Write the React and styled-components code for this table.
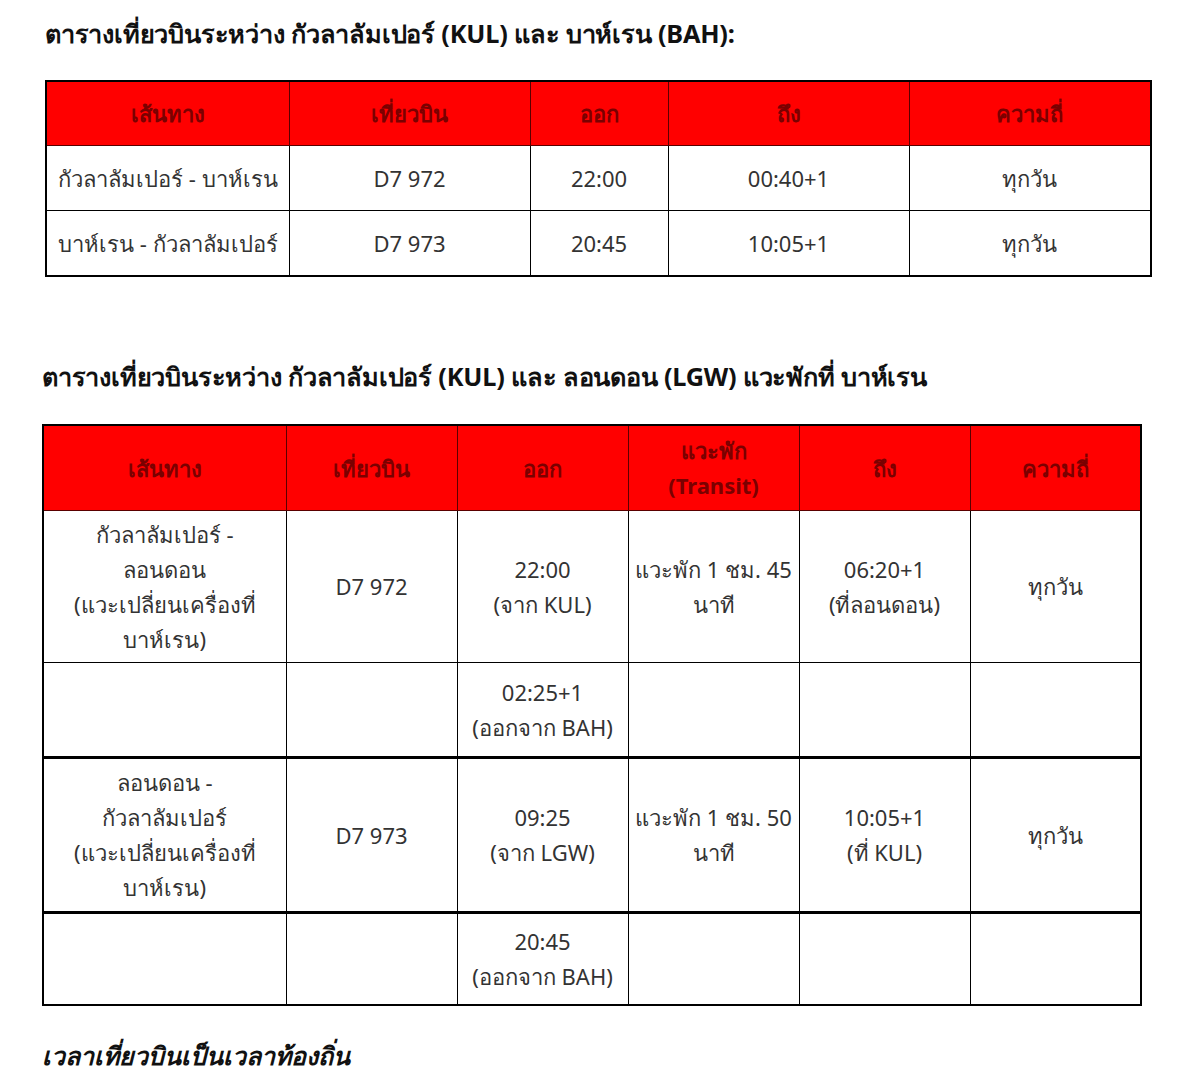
import React from "react";
import styled, { createGlobalStyle } from "styled-components";

const Global = createGlobalStyle`
  html, body { margin: 0; padding: 0; background: #fff; }
  body { font-family: "Noto Sans", "Liberation Sans", sans-serif; color: #2b2b2b; }
`;

const Page = styled.div`
  width: 1200px;
  height: 1085px;
  overflow: hidden;
  padding-top: 14px;
  box-sizing: border-box;
`;

const Section = styled.section`
  margin-left: ${(p) => p.$left}px;
  margin-bottom: ${(p) => p.$gap}px;
`;

const Title = styled.h2`
  margin: 0 0 ${(p) => p.$below}px 0;
  font-size: 25.3px;
  font-weight: 700;
  line-height: 38px;
  color: #111;
  letter-spacing: -0.2px;
`;

const Table = styled.table`
  border-collapse: collapse;
  table-layout: fixed;
  width: ${(p) => p.$width}px;
  border: 2px solid #000;
`;

const HeadCell = styled.th`
  background: #ff0000;
  color: #7a0000;
  font-size: 22px;
  font-weight: 700;
  line-height: 35px;
  border: 1px solid #5a0000;
  height: ${(p) => p.$h}px;
  padding: 0;
  text-align: center;
  vertical-align: middle;
`;

const Cell = styled.td`
  font-size: 22px;
  line-height: 35px;
  color: #333;
  border: 1.5px solid #000;
  border-top-width: ${(p) => (p.$thick ? 3 : 1.5)}px;
  height: ${(p) => p.$h}px;
  padding: 0 4px;
  text-align: center;
  vertical-align: middle;
  white-space: pre-line;
`;

const Note = styled.p`
  margin: 0;
  margin-left: 42px;
  font-size: 25px;
  font-weight: 700;
  font-style: italic;
  color: #111;
  line-height: 38px;
`;

const HeadText = styled.span`
  white-space: pre-line;
`;

const t1Cols = [243, 241, 138, 241, 242];
const t1Head = ["เส้นทาง", "เที่ยวบิน", "ออก", "ถึง", "ความถี่"];
const t1Rows = [
  ["กัวลาลัมเปอร์ - บาห์เรน", "D7 972", "22:00", "00:40+1", "ทุกวัน"],
  ["บาห์เรน - กัวลาลัมเปอร์", "D7 973", "20:45", "10:05+1", "ทุกวัน"],
];

const t2Cols = [243, 171, 171, 171, 171, 171];
const t2Head = ["เส้นทาง", "เที่ยวบิน", "ออก", "แวะพัก\n(Transit)", "ถึง", "ความถี่"];
const t2Rows = [
  {
    h: 151,
    cells: [
      "กัวลาลัมเปอร์ -\nลอนดอน\n(แวะเปลี่ยนเครื่องที่\nบาห์เรน)",
      "D7 972",
      "22:00\n(จาก KUL)",
      "แวะพัก 1 ชม. 45\nนาที",
      "06:20+1\n(ที่ลอนดอน)",
      "ทุกวัน",
    ],
  },
  { h: 93, cells: ["", "", "02:25+1\n(ออกจาก BAH)", "", "", ""] },
  {
    h: 152,
    thick: true,
    cells: [
      "ลอนดอน -\nกัวลาลัมเปอร์\n(แวะเปลี่ยนเครื่องที่\nบาห์เรน)",
      "D7 973",
      "09:25\n(จาก LGW)",
      "แวะพัก 1 ชม. 50\nนาที",
      "10:05+1\n(ที่ KUL)",
      "ทุกวัน",
    ],
  },
  { h: 90, thick: true, cells: ["", "", "20:45\n(ออกจาก BAH)", "", "", ""] },
];

export default function App() {
  return (
    <Page>
      <Global />
      <Section $left={45} $gap={80}>
        <Title $below={28}>ตารางเที่ยวบินระหว่าง กัวลาลัมเปอร์ (KUL) และ บาห์เรน (BAH):</Title>
        <Table $width={1106}>
          <colgroup>
            {t1Cols.map((w, i) => (
              <col key={i} style={{ width: w }} />
            ))}
          </colgroup>
          <thead>
            <tr>
              {t1Head.map((h) => (
                <HeadCell key={h} $h={63}>{h}</HeadCell>
              ))}
            </tr>
          </thead>
          <tbody>
            {t1Rows.map((r, i) => (
              <tr key={i}>
                {r.map((c, j) => (
                  <Cell key={j} $h={64}>{c}</Cell>
                ))}
              </tr>
            ))}
          </tbody>
        </Table>
      </Section>
      <Section $left={42} $gap={30}>
        <Title $below={29}>ตารางเที่ยวบินระหว่าง กัวลาลัมเปอร์ (KUL) และ ลอนดอน (LGW) แวะพักที่ บาห์เรน</Title>
        <Table $width={1099}>
          <colgroup>
            {t2Cols.map((w, i) => (
              <col key={i} style={{ width: w }} />
            ))}
          </colgroup>
          <thead>
            <tr>
              {t2Head.map((h) => (
                <HeadCell key={h} $h={84}><HeadText>{h}</HeadText></HeadCell>
              ))}
            </tr>
          </thead>
          <tbody>
            {t2Rows.map((r, i) => (
              <tr key={i}>
                {r.cells.map((c, j) => (
                  <Cell key={j} $h={r.h} $thick={r.thick}>{c}</Cell>
                ))}
              </tr>
            ))}
          </tbody>
        </Table>
      </Section>
      <Note>เวลาเที่ยวบินเป็นเวลาท้องถิ่น</Note>
    </Page>
  );
}
